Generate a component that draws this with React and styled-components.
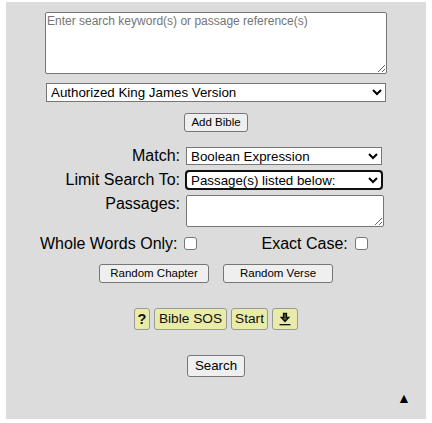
import React from "react";
import styled, { createGlobalStyle } from "styled-components";

const GlobalStyle = createGlobalStyle`
  html, body {
    margin: 0;
    background: #fff;
  }
  body {
    padding: 2px 6px 0;
    font-family: "Liberation Sans", Arial, sans-serif;
    color: #000;
  }
`;

const Panel = styled.form`
  width: 420px;
  height: 417px;
  background: #dcdcdc;
  display: flex;
  flex-direction: column;
  align-items: center;
  padding-top: 10px;
  box-sizing: border-box;
  position: relative;
`;

const TextBox = styled.textarea`
  display: block;
  box-sizing: border-box;
  width: ${(p) => p.$width}px;
  height: ${(p) => p.$height}px;
  margin: 0;
  padding: 1px 0 0 1px;
  border: 1px solid #767676;
  border-radius: 2px;
  background: #fff;
  font-family: "Liberation Sans", Arial, sans-serif;
  font-size: 12px;
  line-height: 14px;
  &::placeholder {
    color: #757575;
    opacity: 1;
  }
`;

const DropDown = styled.select`
  display: block;
  box-sizing: border-box;
  width: ${(p) => p.$width}px;
  height: ${(p) => p.$height}px;
  margin: 0;
  padding: 0;
  border: 1px solid #767676;
  border-radius: 0;
  background: #fff;
  color: #000;
  font-family: "Liberation Sans", Arial, sans-serif;
  font-size: 13.33px;
  ${(p) =>
    p.$focused &&
    `
    outline: 2px solid #101010;
    outline-offset: -1px;
    border-radius: 3px;
  `}
`;

const GrayButton = styled.button`
  box-sizing: border-box;
  width: ${(p) => p.$width}px;
  height: ${(p) => p.$height}px;
  padding: 0;
  border: 1px solid #767676;
  border-radius: 3px;
  background: #efefef;
  color: #000;
  font-family: "Liberation Sans", Arial, sans-serif;
  font-size: ${(p) => p.$size}px;
`;

const YellowButton = styled.button`
  box-sizing: border-box;
  width: ${(p) => p.$width}px;
  height: 22px;
  padding: 0;
  display: flex;
  align-items: center;
  justify-content: center;
  border: 1px solid #9a9a9a;
  border-radius: 3px;
  background: #e9eba8;
  color: #111;
  font-family: "Liberation Sans", Arial, sans-serif;
  font-size: ${(p) => (p.$bold ? 14.5 : 13.7)}px;
  font-weight: ${(p) => (p.$bold ? 700 : 400)};
`;

const VersionSlot = styled.div`
  margin-top: 9px;
`;

const AddSlot = styled.div`
  margin-top: 10px;
`;

const FieldGrid = styled.div`
  margin-top: 15px;
  width: 420px;
  display: grid;
  grid-template-columns: 174px 1fr;
  column-gap: 6px;
  row-gap: 6px;
  align-items: center;
`;

const FieldLabel = styled.label`
  justify-self: end;
  align-self: ${(p) => (p.$top ? "start" : "center")};
  font-size: 16px;
  line-height: 18px;
`;

const CheckRow = styled.div`
  margin-top: 8px;
  width: 420px;
  height: 18px;
  display: flex;
  align-items: center;
  padding-left: 34px;
  box-sizing: border-box;
`;

const CheckLabel = styled.label`
  display: flex;
  align-items: center;
  font-size: 16px;
  line-height: 18px;
  margin-left: ${(p) => p.$offset}px;
`;

const CheckBox = styled.input`
  appearance: none;
  box-sizing: border-box;
  width: 13px;
  height: 13px;
  margin: 0 0 0 ${(p) => p.$gap}px;
  border: 1px solid #767676;
  border-radius: 3px;
  background: #fff;
`;

const RandomRow = styled.div`
  margin-top: 11px;
  display: flex;
  gap: 14px;
`;

const HelpRow = styled.div`
  margin-top: 25px;
  display: flex;
  gap: 4px;
`;

const SearchSlot = styled.div`
  margin-top: 25px;
`;

const BackToTop = styled.span`
  position: absolute;
  left: 391px;
  top: 388px;
  font-size: 14px;
  line-height: 16px;
  color: #000;
`;

const DownloadIcon = () => (
  <svg width="12" height="14" viewBox="0 0 12 14" aria-hidden="true">
    <path
      d="M4.500 1.500h3v4h2.300L6 9.500 2.200 5.500h2.300z"
      fill="#55552f"
      stroke="#111"
      strokeWidth="1.300"
    />
    <rect x="0.500" y="12" width="11" height="1.300" fill="#111" />
  </svg>
);

export default function App() {
  return (
    <>
      <GlobalStyle />
      <Panel>
        <TextBox
          $width={342}
          $height={62}
          placeholder="Enter search keyword(s) or passage reference(s)"
        />
        <VersionSlot>
          <DropDown $width={340} $height={19} defaultValue="kjv">
            <option value="kjv">Authorized King James Version</option>
          </DropDown>
        </VersionSlot>
        <AddSlot>
          <GrayButton type="button" $width={64} $height={19} $size={11.5}>
            Add Bible
          </GrayButton>
        </AddSlot>
        <FieldGrid>
          <FieldLabel>Match:</FieldLabel>
          <DropDown $width={196} $height={18} defaultValue="bool">
            <option value="bool">Boolean Expression</option>
          </DropDown>
          <FieldLabel>Limit Search To:</FieldLabel>
          <DropDown $width={196} $height={18} $focused defaultValue="list">
            <option value="list">Passage(s) listed below:</option>
          </DropDown>
          <FieldLabel $top>Passages:</FieldLabel>
          <TextBox $width={198} $height={32} />
        </FieldGrid>
        <CheckRow>
          <CheckLabel $offset={0}>
            Whole Words Only:
            <CheckBox type="checkbox" $gap={6} />
          </CheckLabel>
          <CheckLabel $offset={65}>
            Exact Case:
            <CheckBox type="checkbox" $gap={7} />
          </CheckLabel>
        </CheckRow>
        <RandomRow>
          <GrayButton type="button" $width={110} $height={19} $size={11.5}>
            Random Chapter
          </GrayButton>
          <GrayButton type="button" $width={110} $height={19} $size={11.5}>
            Random Verse
          </GrayButton>
        </RandomRow>
        <HelpRow>
          <YellowButton type="button" $width={16} $bold>
            ?
          </YellowButton>
          <YellowButton type="button" $width={73}>
            Bible SOS
          </YellowButton>
          <YellowButton type="button" $width={37}>
            Start
          </YellowButton>
          <YellowButton type="button" $width={26} aria-label="Download">
            <DownloadIcon />
          </YellowButton>
        </HelpRow>
        <SearchSlot>
          <GrayButton type="submit" $width={58} $height={22} $size={13.33}>
            Search
          </GrayButton>
        </SearchSlot>
        <BackToTop>▲</BackToTop>
      </Panel>
    </>
  );
}
